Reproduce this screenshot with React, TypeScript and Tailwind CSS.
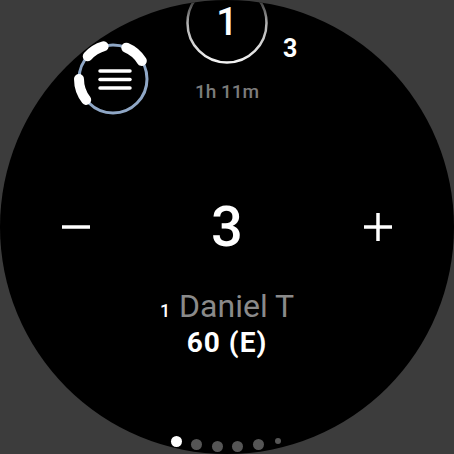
import React from 'react';

const font = { fontFamily: 'Roboto, "Liberation Sans", sans-serif' };

function polar(cx: number, cy: number, r: number, deg: number) {
  const a = (deg * Math.PI) / 180;
  return [cx + r * Math.cos(a), cy + r * Math.sin(a)];
}

function arc(cx: number, cy: number, r: number, from: number, to: number) {
  const [x1, y1] = polar(cx, cy, r, from);
  const [x2, y2] = polar(cx, cy, r, to);
  const large = to - from > 180 ? 1 : 0;
  return `M ${x1} ${y1} A ${r} ${r} 0 ${large} 1 ${x2} ${y2}`;
}

function MenuButton() {
  // ring with three bright progress segments, hamburger in the middle
  return (
    <svg width="80" height="80" viewBox="0 0 80 80" className="absolute left-[73px] top-[39px]">
      <circle cx="40" cy="40" r="34" fill="none" stroke="#8fa7c6" strokeWidth="3" />
      <g stroke="#fff" strokeWidth="10" strokeLinecap="round" fill="none">
        <path d={arc(40, 40, 34, 142, 180)} />
        <path d={arc(40, 40, 34, 222, 254)} />
        <path d={arc(40, 40, 34, 293, 328)} />
      </g>
      <g stroke="#fff" strokeWidth="3.5" strokeLinecap="round">
        <line x1="27" y1="32" x2="57" y2="32" />
        <line x1="27" y1="40.5" x2="57" y2="40.5" />
        <line x1="27" y1="49" x2="57" y2="49" />
      </g>
    </svg>
  );
}

function HoleRing() {
  return (
    <svg width="84" height="84" viewBox="0 0 84 84" className="absolute left-[185px] top-[-19px]">
      <defs>
        <linearGradient id="ring" x1="0" y1="0" x2="0" y2="1">
          <stop offset="0.15" stopColor="#1a1a1a" />
          <stop offset="0.5" stopColor="#b0b0b0" />
          <stop offset="1" stopColor="#f4f4f4" />
        </linearGradient>
      </defs>
      <circle cx="42" cy="42" r="39.5" fill="none" stroke="url(#ring)" strokeWidth="2.5" />
    </svg>
  );
}

const dots = [
  { x: 176, y: 441, r: 5.5, c: '#ffffff' },
  { x: 196, y: 444, r: 5.5, c: '#555555' },
  { x: 217, y: 446, r: 5.5, c: '#555555' },
  { x: 237, y: 446, r: 5.5, c: '#555555' },
  { x: 258, y: 444, r: 5.5, c: '#555555' },
  { x: 278, y: 441, r: 3, c: '#555555' },
];

export default function App() {
  return (
    <div className="w-[454px] h-[454px] bg-[#3c3c3c] overflow-hidden" style={font}>
      <div className="relative w-[454px] h-[454px] rounded-full bg-black flex flex-col items-center overflow-hidden">
        <div className="relative w-full h-[199px] shrink-0">
          <HoleRing />
          <div className="absolute left-0 right-0 top-[3px] text-center text-white text-[38px] font-medium leading-none">1</div>
          <div className="absolute left-[283px] top-[36px] text-white text-[25px] font-bold leading-none">3</div>
          <div className="absolute left-0 right-0 top-[82px] text-center text-[#7c7c7c] text-[19px] font-medium leading-none">
            1h 11m
          </div>
          <MenuButton />
        </div>

        <div className="w-full h-[56px] flex items-center justify-between px-[62px]">
          <svg width="28" height="28" viewBox="0 0 28 28">
            <line x1="0" y1="14" x2="28" y2="14" stroke="#fff" strokeWidth="3.5" />
          </svg>
          <span className="text-white text-[56px] font-medium leading-none">3</span>
          <svg width="28" height="28" viewBox="0 0 28 28">
            <line x1="0" y1="14" x2="28" y2="14" stroke="#fff" strokeWidth="3.5" />
            <line x1="14" y1="0" x2="14" y2="28" stroke="#fff" strokeWidth="3.5" />
          </svg>
        </div>

        <div className="mt-[35px] flex items-baseline gap-[9px]">
          <span className="text-white text-[18px] font-medium leading-none">1</span>
          <span className="text-[#8a8a8a] text-[32px] leading-none">Daniel T</span>
        </div>
        <div className="mt-[7px] text-white text-[28px] font-bold leading-none tracking-[1px]">60 (E)</div>

        {dots.map((d, i) => (
          <span
            key={i}
            className="absolute rounded-full"
            style={{ left: d.x - d.r, top: d.y - d.r, width: d.r * 2, height: d.r * 2, background: d.c }}
          />
        ))}
      </div>
    </div>
  );
}
